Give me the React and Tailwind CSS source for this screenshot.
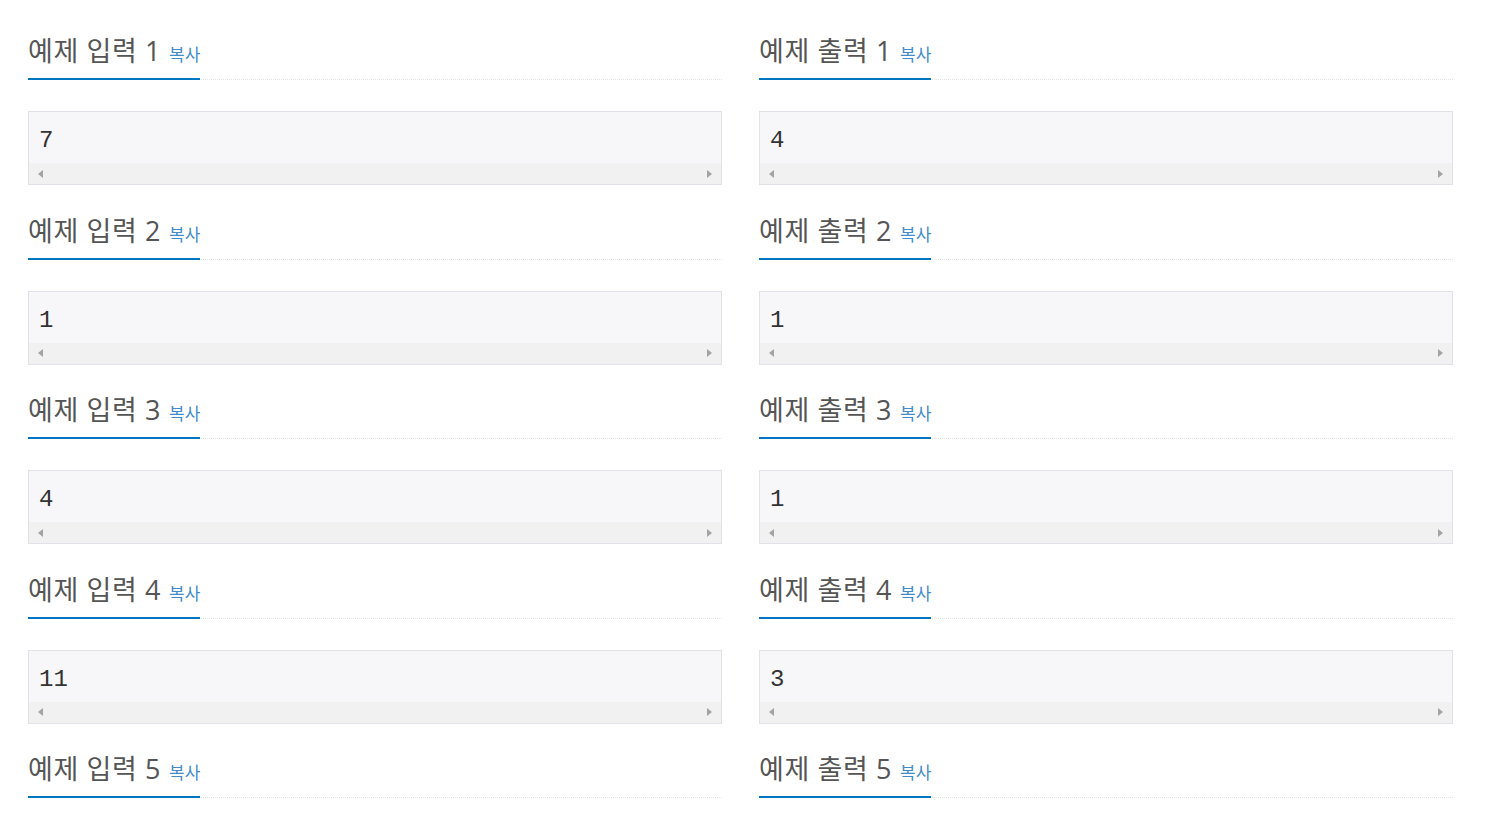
import React from "react";

const samples = [
  { input: "7", output: "4" },
  { input: "1", output: "1" },
  { input: "4", output: "1" },
  { input: "11", output: "3" },
  { input: null, output: null },
];

const Headline = ({ title }) => (
  <div className="flex h-[74.5px] items-end border-b border-dotted border-[#e4e4e4]">
    <h2 className="-mb-px flex items-baseline border-b-2 border-[#0076c0] pb-[8px] text-[27px] leading-[30px] font-normal tracking-[0.6px] text-[#555]">
      {title}
      <a className="ml-[8px] cursor-pointer text-[17px] tracking-normal text-[#428bca]">복사</a>
    </h2>
  </div>
);

const Scrollbar = () => (
  <div className="flex h-[21px] items-center justify-between bg-[#f1f1f1] pl-[9px] pr-[9px]">
    <svg width="5" height="8" viewBox="0 0 5 8">
      <polygon points="5,0 5,8 0,4" fill="#a3a3a3" />
    </svg>
    <svg width="5" height="8" viewBox="0 0 5 8">
      <polygon points="0,0 0,8 5,4" fill="#a3a3a3" />
    </svg>
  </div>
);

const SampleBox = ({ value }) => (
  <div className="mt-[31px] border border-[#e1e1e8] bg-[#f7f7f9]">
    <pre className="h-[51px] px-[10px] pt-[17px] font-['Liberation_Mono',monospace] text-[24px] leading-[24px] text-[#333]">
      {value}
    </pre>
    <Scrollbar />
  </div>
);

// the 5th sample's box lies below the fold, so only its headline is drawn
const Section = ({ title, value }) => (
  <section>
    <Headline title={title} />
    {value !== null && <SampleBox value={value} />}
  </section>
);

export default function App() {
  return (
    <div className="h-[820px] overflow-hidden bg-white font-['Open_Sans','Noto_Sans_CJK_KR',sans-serif]">
      <div className="grid w-[1453px] grid-cols-2 gap-x-[37px] pl-[28px] pt-[5.5px]">
        {samples.map((s, i) => (
          <React.Fragment key={i}>
            <Section title={`예제 입력 ${i + 1}`} value={s.input} />
            <Section title={`예제 출력 ${i + 1}`} value={s.output} />
          </React.Fragment>
        ))}
      </div>
    </div>
  );
}
